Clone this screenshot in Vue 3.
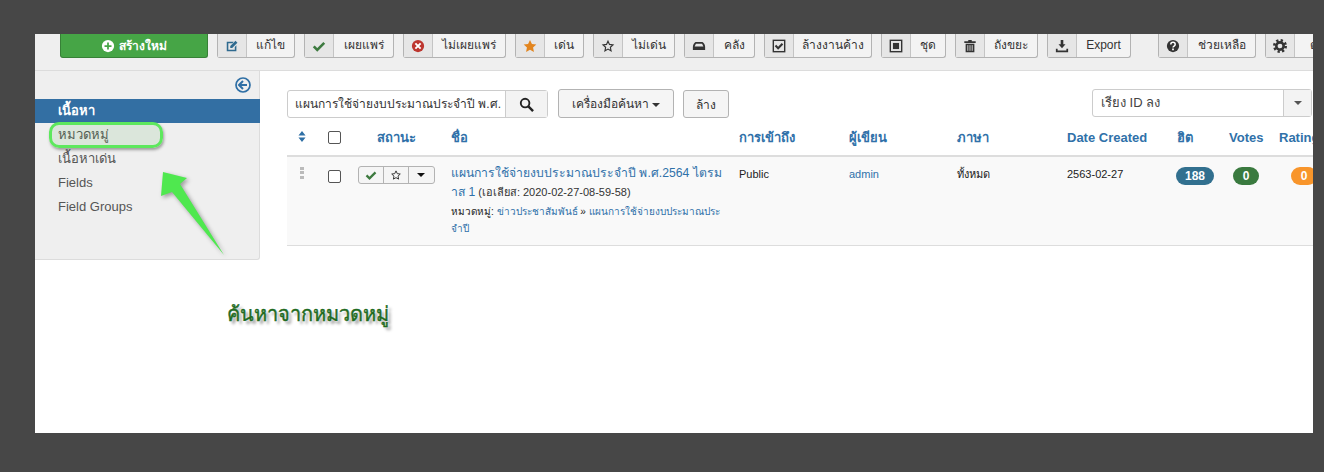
<template>
  <div class="page">
    <div class="window">
      <div class="toolbar">
        <button class="btn-new">
          <svg class="ic" viewBox="0 0 16 16"><circle cx="8" cy="8" r="7" fill="#fff" /><path d="M8 4v8M4 8h8" stroke="#46a546" stroke-width="2" /></svg>
          สร้างใหม่
        </button>
        <div v-for="b in tools" :key="b.label" class="tool" :class="{ gap: b.gap }" :style="{ width: b.width + 'px' }">
          <span class="tool-icon">
            <svg class="ic" viewBox="0 0 16 16" v-html="icons[b.icon]"></svg>
          </span>
          <span class="tool-label">{{ b.label }}</span>
        </div>
      </div>

      <div class="body">
        <aside class="sidebar">
          <div class="collapse">
            <svg viewBox="0 0 16 16" width="16" height="16"><circle cx="8" cy="8" r="7" fill="none" stroke="#2f6fa5" stroke-width="1.700" /><path d="M8 4 4 8l4 4M4.500 8H12" fill="none" stroke="#2f6fa5" stroke-width="2" /></svg>
          </div>
          <ul class="menu">
            <li class="active">เนื้อหา</li>
            <li class="marked">หมวดหมู่</li>
            <li>เนื้อหาเด่น</li>
            <li>Fields</li>
            <li>Field Groups</li>
          </ul>
        </aside>

        <main class="content">
          <div class="filters">
            <div class="search">
              <span class="search-input">แผนการใช้จ่ายงบประมาณประจำปี พ.ศ.</span>
              <span class="search-btn">
                <svg viewBox="0 0 16 16" width="15" height="15"><circle cx="6.500" cy="6.500" r="4.600" fill="none" stroke="#222" stroke-width="2" /><path d="m10 10 5 5" stroke="#222" stroke-width="2.600" /></svg>
              </span>
            </div>
            <button class="btn tools-btn">เครื่องมือค้นหา <i class="caret"></i></button>
            <button class="btn clear-btn">ล้าง</button>
            <div class="sort">
              <span class="sort-value">เรียง ID ลง</span>
              <span class="sort-arrow"><i class="caret grey"></i></span>
            </div>
          </div>

          <div class="table">
            <div class="row head">
              <span class="c-drag"><svg viewBox="0 0 10 14" width="8" height="11"><path d="M5 0 9.500 5.800H.5zM5 14 .5 8.200h9z" fill="#2f6fa5" /></svg></span>
              <span class="c-check"><i class="check"></i></span>
              <span class="c-status">สถานะ</span>
              <span>ชื่อ</span>
              <span>การเข้าถึง</span>
              <span>ผู้เขียน</span>
              <span>ภาษา</span>
              <span>Date Created</span>
              <span>ฮิต</span>
              <span>Votes</span>
              <span>Rating</span>
            </div>
            <div class="row item">
              <span class="c-drag"><i class="grip"></i></span>
              <span class="c-check"><i class="check"></i></span>
              <span class="c-status">
                <span class="status-group">
                  <b><svg class="ic" viewBox="0 0 16 16" v-html="icons.check"></svg></b>
                  <b><svg class="ic" viewBox="0 0 16 16" v-html="icons.starO"></svg></b>
                  <b class="last"><i class="caret dark"></i></b>
                </span>
              </span>
              <span class="title-cell">
                <a class="title">แผนการใช้จ่ายงบประมาณประจำปี พ.ศ.2564 ไตรม<br />าส 1</a>
                <small> (เอเลียส: 2020-02-27-08-59-58)</small>
                <div class="cat">หมวดหมู่: <a>ข่าวประชาสัมพันธ์</a> » <a>แผนการใช้จ่ายงบประมาณประ<br />จำปี</a></div>
              </span>
              <span>Public</span>
              <span><a>admin</a></span>
              <span>ทั้งหมด</span>
              <span>2563-02-27</span>
              <span class="c-badge"><em class="badge blue">188</em></span>
              <span class="c-badge"><em class="badge green">0</em></span>
              <span class="c-badge"><em class="badge orange">0</em></span>
            </div>
          </div>
        </main>
      </div>

      <!-- annotations drawn on top of the screenshot -->
      <svg class="arrow" viewBox="0 0 80 100" width="80" height="100">
        <path d="M4 2 28 8 21 14 65 85 13 22 2 26z" fill="#4fe84f" />
      </svg>
      <div class="note">ค้นหาจากหมวดหมู่</div>
    </div>
  </div>
</template>

<script setup>
const tools = [
  { label: 'แก้ไข', icon: 'edit', width: 78 },
  { label: 'เผยแพร่', icon: 'check', width: 90 },
  { label: 'ไม่เผยแพร่', icon: 'times', width: 103 },
  { label: 'เด่น', icon: 'star', width: 69 },
  { label: 'ไม่เด่น', icon: 'starO', width: 82 },
  { label: 'คลัง', icon: 'archive', width: 71 },
  { label: 'ล้างงานค้าง', icon: 'checkin', width: 108 },
  { label: 'ชุด', icon: 'batch', width: 65 },
  { label: 'ถังขยะ', icon: 'trash', width: 83 },
  { label: 'Export', icon: 'download', width: 84 },
  { label: 'ช่วยเหลือ', icon: 'help', width: 98, gap: true },
  { label: 'ตั้งค่า', icon: 'cog', width: 90 },
]

const icons = {
  edit: '<path d="M2 3h8L8.500 4.800H3.800v7.400h7.400V9L13 7.200V14H2z" fill="#2f6a8f"/><path d="M6 8l6-6 2.200 2.200-6 6H6z" fill="#2f6a8f"/>',
  check: '<path d="M2 8.500 6 12.500 14 4.500" fill="none" stroke="#3d7a3f" stroke-width="3"/>',
  times: '<circle cx="8" cy="8" r="7" fill="#bd362f"/><path d="M5 5l6 6M11 5l-6 6" stroke="#fff" stroke-width="2.200"/>',
  star: '<path d="M8 1l2.200 4.700 5 .6-3.700 3.500 1 5.100L8 12.400 3.500 14.900l1-5.100L.8 6.300l5-.6z" fill="#e2851f"/>',
  starO: '<path d="M8 2.500l1.700 3.700 4 .5-3 2.800.8 4L8 11.500l-3.500 2 .8-4-3-2.800 4-.5z" fill="none" stroke="#333" stroke-width="1.300"/>',
  archive: '<path d="M4 3.500h8c2 1.500 3 3.500 3 5.500v3.500H1V9c0-2 1-4 3-5.500z" fill="#333"/><path d="M4.500 5.500h7L13 8.500H3z" fill="#e6e6e6"/>',
  checkin: '<rect x="1.500" y="1.500" width="13" height="13" fill="none" stroke="#333" stroke-width="1.600"/><path d="M4 7.500l3 3 5-5" fill="none" stroke="#333" stroke-width="2.400"/>',
  batch: '<rect x="1.500" y="1.500" width="13" height="13" fill="none" stroke="#333" stroke-width="1.600"/><rect x="4.500" y="4.500" width="7" height="7" fill="#333"/>',
  trash: '<path d="M1.500 2.500h13v2h-13zM6 1h4v1.500H6zM3 5.500h10V15H3z" fill="#333"/><path d="M5.500 7v6.500M8 7v6.500M10.500 7v6.500" stroke="#e6e6e6" stroke-width="1"/>',
  download: '<path d="M6.500 1h3v5H12L8 10.500 4 6h2.500zM1 11h2v2h10v-2h2v4H1z" fill="#333"/>',
  help: '<circle cx="8" cy="8" r="7" fill="#333"/><path d="M5.500 6.200c0-3.200 5-3.200 5 0 0 2-2.500 1.800-2.500 3.600" fill="none" stroke="#fff" stroke-width="1.700"/><path d="M7 10.800h2v2H7z" fill="#fff"/>',
  cog: '<circle cx="8" cy="8" r="4.200" fill="none" stroke="#333" stroke-width="3"/><circle cx="8" cy="8" r="6.500" fill="none" stroke="#333" stroke-width="3" stroke-dasharray="2.550 2.550"/>',
}
</script>

<style>
body {
  background: #474747;
}
</style>

<style scoped>
.page {
  width: 1324px;
  height: 472px;
  background: #474747;
  padding: 34px 11px 39px 35px;
  box-sizing: border-box;
  font-family: "Liberation Sans", "Noto Sans", sans-serif;
  font-size: 13px;
  color: #333;
}

.window {
  position: relative;
  height: 399px;
  background: #fff;
  overflow: hidden;
}

.toolbar {
  display: flex;
  align-items: flex-start;
  gap: 9px;
  height: 37px;
  padding: 0 0 0 25px;
  box-sizing: border-box;
  background: #efefef;
  border-bottom: 1px solid #dcdcdc;
  white-space: nowrap;
}

.btn-new {
  flex: none;
  width: 148px;
  height: 24px;
  border: 1px solid #378137;
  border-top: 0;
  border-radius: 0 0 3px 3px;
  background: #46a546;
  color: #fff;
  font: bold 12px "Liberation Sans", "Noto Sans", sans-serif;
  display: flex;
  align-items: center;
  justify-content: center;
  gap: 4px;
  padding: 0;
}

.ic {
  width: 14px;
  height: 14px;
  flex: none;
}

.tool {
  flex: none;
  display: flex;
  height: 24px;
  background: #f3f3f3;
  border: 1px solid #b3b3b3;
  border-top: 0;
  border-radius: 0 0 3px 3px;
  box-sizing: border-box;
}

.tool.gap {
  margin-left: 18px;
}

.tool-icon {
  flex: none;
  width: 29px;
  display: flex;
  align-items: center;
  justify-content: center;
  background: #e6e6e6;
  border-right: 1px solid #c4c4c4;
  box-sizing: border-box;
}

.tool-label {
  flex: 1;
  line-height: 22px;
  font-size: 12px;
  text-align: center;
}

.body {
  display: flex;
  align-items: flex-start;
}

.sidebar {
  flex: none;
  width: 225px;
  height: 189px;
  background: #efefef;
  border-right: 1px solid #dcdcdc;
  border-bottom: 1px solid #dcdcdc;
  border-radius: 0 0 3px 0;
  box-sizing: border-box;
}

.collapse {
  height: 28px;
  display: flex;
  justify-content: flex-end;
  padding: 6px 8px 0 0;
  box-sizing: border-box;
}

.menu {
  list-style: none;
  margin: 0;
  padding: 0;
}

.menu li {
  height: 24px;
  line-height: 24px;
  padding-left: 23px;
  color: #555;
}

.menu li.active {
  margin-right: -1px;
  background: #336fa3;
  color: #fff;
  font-weight: bold;
}

.menu li.marked {
  position: relative;
}

.menu li.marked::after {
  content: "";
  position: absolute;
  left: 14px;
  top: -1px;
  width: 114px;
  height: 26px;
  box-sizing: border-box;
  border: 3px solid #5de85d;
  border-radius: 10px;
  background: rgba(70, 165, 70, 0.12);
  box-shadow: 1px 2px 3px rgba(0, 0, 0, 0.35);
}

.content {
  flex: 1;
  min-width: 0;
  padding: 18px 0 0 27px;
}

.filters {
  display: flex;
  align-items: flex-start;
  gap: 10px;
  height: 29px;
}

.search {
  display: flex;
  flex: none;
  width: 261px;
  height: 28px;
  margin-top: 1px;
  border: 1px solid #ccc;
  border-radius: 3px;
  box-sizing: border-box;
}

.search-input {
  flex: 1;
  min-width: 0;
  padding-left: 7px;
  font-size: 12px;
  line-height: 26px;
  overflow: hidden;
  white-space: nowrap;
}

.search-btn {
  flex: none;
  width: 42px;
  display: flex;
  align-items: center;
  justify-content: center;
  background: #f3f3f3;
  border-left: 1px solid #ccc;
  box-sizing: border-box;
}

.btn {
  padding: 0;
  border: 1px solid #b3b3b3;
  border-radius: 3px;
  background: #f5f5f5;
  color: #333;
  font: 12px "Liberation Sans", "Noto Sans", sans-serif;
  white-space: nowrap;
}

.tools-btn {
  width: 116px;
  height: 29px;
}

.clear-btn {
  width: 46px;
  height: 28px;
  margin: 1px 0 0 -1px;
}

.caret {
  display: inline-block;
  width: 0;
  height: 0;
  vertical-align: middle;
  border-top: 4px solid #333;
  border-left: 4px solid transparent;
  border-right: 4px solid transparent;
}

.caret.grey {
  border-top-color: #555;
}

.caret.dark {
  border-top-color: #111;
}

.sort {
  display: flex;
  flex: none;
  width: 220px;
  height: 28px;
  margin-left: auto;
  margin-right: 1px;
  border: 1px solid #ccc;
  border-radius: 3px;
  box-sizing: border-box;
}

.sort-value {
  flex: 1;
  padding-left: 8px;
  line-height: 26px;
  color: #444;
}

.sort-arrow {
  width: 28px;
  display: flex;
  align-items: center;
  justify-content: center;
  background: #f3f3f3;
  border-left: 1px solid #ccc;
  box-sizing: border-box;
}

.table {
  margin-top: 7px;
}

.row {
  display: grid;
  grid-template-columns: 30px 32px 94px 288px 110px 108px 110px 110px 52px 50px 66px;
  font-size: 11px;
}

.row > span {
  padding: 0 8px;
  box-sizing: border-box;
  min-width: 0;
}

.head {
  height: 32px;
  padding-bottom: 6px;
  align-items: center;
  color: #3071a9;
  font-size: 13px;
  font-weight: bold;
  border-bottom: 2px solid #ddd;
  box-sizing: border-box;
}

.item {
  height: 89px;
  background: #f9f9f9;
  border-bottom: 1px solid #ddd;
  padding-top: 10px;
  box-sizing: border-box;
  line-height: 15px;
  color: #222;
}

.row .c-drag {
  padding: 0 0 0 11px;
}

.row .c-check {
  padding: 0 0 0 11px;
}

.row .c-status {
  padding: 0;
  text-align: center;
}

.row .c-badge {
  padding: 0;
  text-align: center;
}

.check {
  display: block;
  width: 13px;
  height: 13px;
  box-sizing: border-box;
  border: 1px solid #555;
  border-radius: 2px;
  background: #fff;
}

.item .check {
  margin-top: 3px;
}

.item .c-drag {
  padding-left: 13px;
}

.grip {
  display: block;
  width: 4px;
  height: 12px;
  background: repeating-linear-gradient(#bbb 0 3px, transparent 3px 4.500px);
}

.status-group {
  display: inline-flex;
  height: 18px;
  margin-top: -1px;
  border: 1px solid #b3b3b3;
  border-radius: 3px;
  background: #f5f5f5;
  box-sizing: border-box;
}

.status-group b {
  width: 25px;
  display: flex;
  align-items: center;
  justify-content: center;
  border-right: 1px solid #b3b3b3;
  box-sizing: border-box;
}

.status-group b.last {
  border-right: 0;
}

.status-group .ic {
  width: 12px;
  height: 12px;
}

.title-cell {
  margin-top: -3px;
}

.title {
  font-size: 12.200px;
  line-height: 19px;
  color: #3071a9;
}

.title-cell small {
  font-size: 11px;
  color: #333;
}

.cat {
  margin-top: 1px;
  line-height: 17px;
  font-size: 10px;
  color: #222;
}

a {
  color: #3071a9;
}

.badge {
  display: inline-block;
  min-width: 26px;
  height: 18px;
  padding: 0 8.500px;
  border-radius: 9px;
  box-sizing: border-box;
  color: #fff;
  font-style: normal;
  font-weight: bold;
  font-size: 12px;
  line-height: 18px;
  text-align: center;
}

.blue {
  background: #32708f;
}

.green {
  background: #3a7a3f;
}

.orange {
  background: #f8952b;
}

.arrow {
  position: absolute;
  left: 124px;
  top: 136px;
  filter: drop-shadow(2px 2px 2px rgba(0, 0, 0, 0.35));
}

.note {
  position: absolute;
  left: 192px;
  top: 264px;
  font-size: 20px;
  color: #1f6b1f;
  -webkit-text-stroke: 0.400px #1f6b1f;
  text-shadow: 0 0 2px #fff, 3px 3px 3px rgba(0, 0, 0, 0.4);
}
</style>
